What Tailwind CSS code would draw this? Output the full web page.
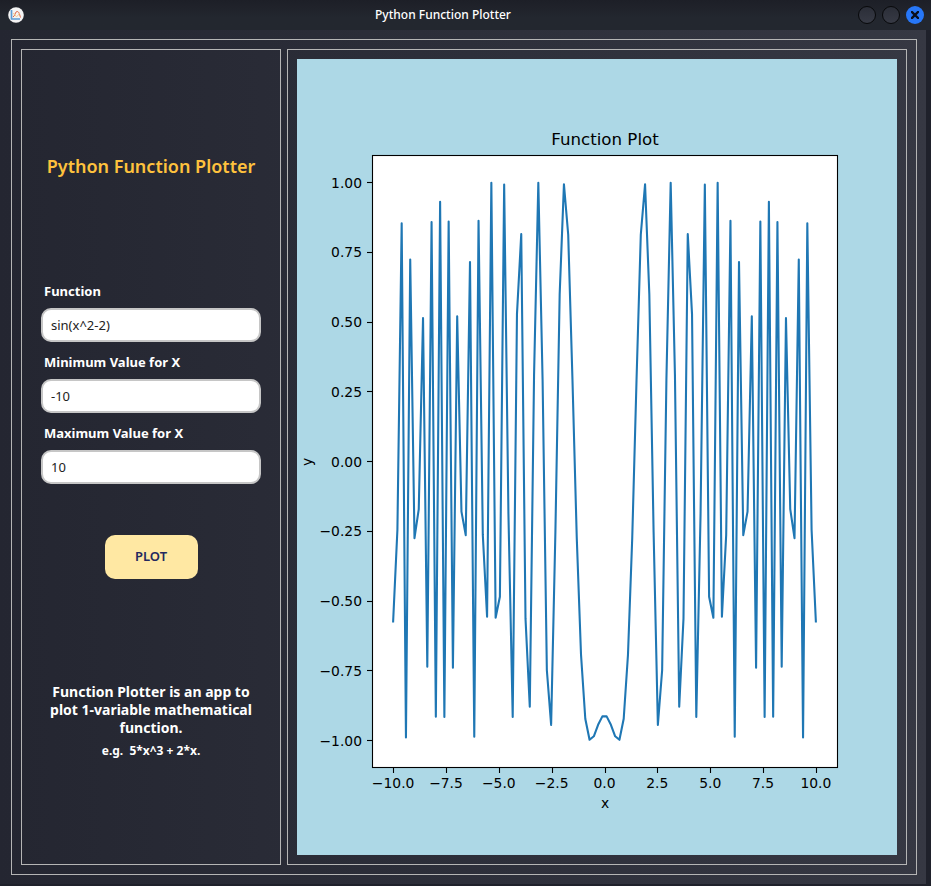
<!DOCTYPE html>
<html lang="en">
<head>
<meta charset="utf-8">
<meta name="viewport" content="width=device-width, initial-scale=1">
<title>Python Function Plotter</title>
<script src="https://cdn.jsdelivr.net/npm/@tailwindcss/browser@4"></script>
</head>
<body class="flex h-screen flex-col bg-[#1f212b] font-['Noto_Sans',sans-serif] text-white">
  <header class="flex h-[30px] shrink-0 items-center bg-linear-to-b from-[#1d1f27] to-[#23272f] to-60% pr-[7px] pl-2">
    <svg class="size-4" viewBox="0 0 16 16" aria-hidden="true">
      <circle cx="8" cy="8" r="7.8" fill="#f4f4f4"/>
      <path d="M3.500 3v9h8.500" fill="none" stroke="#5b9bd5" stroke-width="1.700"/>
      <path d="M5 10C7 9.500 7 4.500 9 4.500S11.500 7 12.500 10.500" fill="none" stroke="#e0603f" stroke-width="1"/>
      <path d="M5 6.500c2 0 2 3 3.500 3S10 7 12 6.500" fill="none" stroke="#f3c98a" stroke-width="1"/>
    </svg>
    <div class="flex-1 pl-1 text-center text-[12px] font-medium">Python Function Plotter</div>
    <div class="flex justify-end gap-[6px]">
      <button aria-label="Minimize" class="size-[18px] rounded-full border border-[#08090b] bg-linear-to-b from-[#2b2e38] to-[#373a45]"></button>
      <button aria-label="Maximize" class="size-[18px] rounded-full border border-[#08090b] bg-linear-to-b from-[#2b2e38] to-[#373a45]"></button>
      <button aria-label="Close" class="flex size-[18px] items-center justify-center rounded-full bg-[#2777f7]">
        <svg class="size-2" viewBox="0 0 8 8" aria-hidden="true"><path d="M1 1l6 6M7 1L1 7" stroke="#0a0f1c" stroke-width="2.400" stroke-linecap="square"/></svg>
      </button>
    </div>
  </header>
  <main class="mr-[5px] mb-[2px] flex min-h-0 flex-1 bg-linear-to-r from-[#242631] to-[#363843] pt-[9px] pr-[9px] pb-[9px] pl-[11px]">
    <div class="flex min-h-0 flex-1 gap-[6px] border border-[#b5b5b5] p-[9px]">
      <section class="flex w-[260px] shrink-0 flex-col justify-evenly border border-[#b5b5b5] px-[19px]">
        <h1 class="text-center text-lg leading-6 font-semibold text-[#ffc23d]">Python Function Plotter</h1>
        <form class="flex flex-col" onsubmit="return false">
          <label for="fn" class="mb-2 pl-[3px] text-[13px] leading-[18px] font-bold">Function</label>
          <input id="fn" value="sin(x^2-2)" class="mb-[11px] h-[34px] w-full rounded-[10px] border-2 border-[#c6c6c6] bg-white px-2 text-[13px] text-[#222]">
          <label for="min" class="mb-2 pl-[3px] text-[13px] leading-[18px] font-bold">Minimum Value for X</label>
          <input id="min" value="-10" class="mb-[11px] h-[34px] w-full rounded-[10px] border-2 border-[#c6c6c6] bg-white px-2 text-[13px] text-[#222]">
          <label for="max" class="mb-2 pl-[3px] text-[13px] leading-[18px] font-bold">Maximum Value for X</label>
          <input id="max" value="10" class="mb-[51px] h-[34px] w-full rounded-[10px] border-2 border-[#c6c6c6] bg-white px-2 text-[13px] text-[#222]">
          <button class="h-11 w-[93px] self-center rounded-[10px] bg-[#ffe8a3] text-[13px] font-semibold text-[#24285f]">PLOT</button>
        </form>
        <div class="text-center font-bold">
          <p class="text-sm leading-[18px]">Function Plotter is an app to plot 1-variable mathematical function.</p>
          <p class="mt-[5px] text-xs leading-[18px] whitespace-pre">e.g.  5*x^3 + 2*x.</p>
        </div>
      </section>
      <section class="min-w-0 flex-1 border border-[#b5b5b5] p-[9px]">
        <svg class="size-full bg-[#add8e6] font-['DejaVu_Sans',sans-serif]" viewBox="0 0 600 796" role="img" aria-label="Function Plot" fill="#000">
          <rect x="75.500" y="96.500" width="465" height="612" fill="#fff"/>
          <polyline id="curve" fill="none" stroke="#1f77b4" stroke-width="2.083" stroke-linejoin="round" stroke-linecap="square"/>
          <rect x="75.500" y="96.500" width="465" height="612" fill="none" stroke="#000" stroke-width="1.100"/>
          <g id="ticks" font-size="13.890"></g>
          <text x="308" y="86" font-size="16.670" text-anchor="middle">Function Plot</text>
          <text x="308" y="749" font-size="13.890" text-anchor="middle">x</text>
          <text transform="translate(15 403) rotate(-90)" font-size="13.890" text-anchor="middle">y</text>
        </svg>
      </section>
    </div>
  </main>
  <script>
    const px = x => 75 + (x + 11) / 22 * 465;
    const py = y => 402.5 - y * 279;
    const pts = [];
    for (let i = 0; i < 100; i++) {
      const x = -10 + 20 * i / 99;
      pts.push(px(x).toFixed(2) + ',' + py(Math.sin(x * x - 2)).toFixed(2));
    }
    document.getElementById('curve').setAttribute('points', pts.join(' '));
    const fmt = (v, d) => v.toFixed(d).replace('-', '\u2212');
    let out = '';
    for (let v = -10; v <= 10; v += 2.5) {
      const x = Math.round(px(v)) + 0.5;
      out += `<path d="M${x} 709v5" stroke="#000" stroke-width="1.1"/><text x="${px(v)}" y="729" text-anchor="middle">${fmt(v, 1)}</text>`;
    }
    for (let v = -1; v <= 1; v += 0.25) {
      const y = Math.floor(py(v)) + 0.5;
      out += `<path d="M75 ${y}h-5" stroke="#000" stroke-width="1.1"/><text x="65" y="${Math.round(py(v) + 5)}" text-anchor="end">${fmt(v, 2)}</text>`;
    }
    document.getElementById('ticks').innerHTML = out;
  </script>
</body>
</html>
